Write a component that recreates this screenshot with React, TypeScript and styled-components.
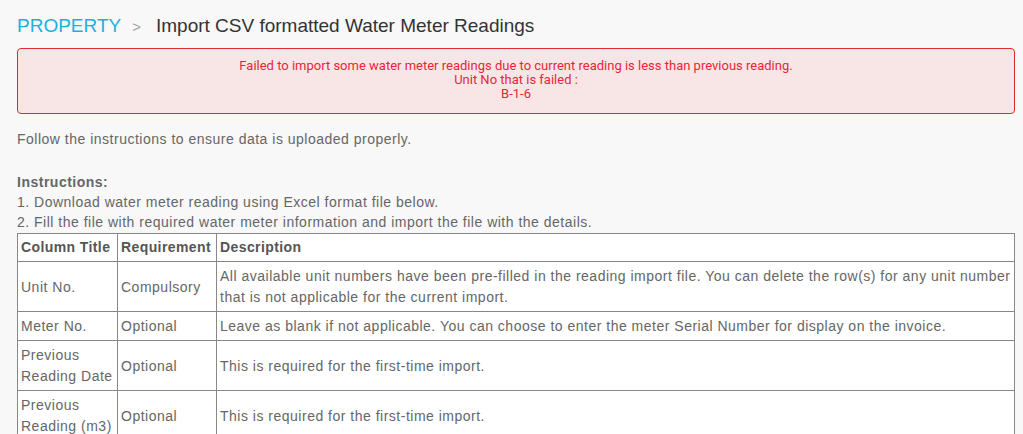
import React from "react";
import styled, { createGlobalStyle } from "styled-components";

const GlobalStyle = createGlobalStyle`
  html, body {
    margin: 0;
    padding: 0;
    background: #f8f8f8;
  }
  body {
    font-family: "Liberation Sans", Arial, sans-serif;
    font-size: 14px;
    line-height: 20px;
    color: #666;
  }
`;

interface Row {
  title: string[];
  requirement: string;
  description: string;
}

const rows: Row[] = [
  {
    title: ["Unit No."],
    requirement: "Compulsory",
    description:
      "All available unit numbers have been pre-filled in the reading import file. You can delete the row(s) for any unit number that is not applicable for the current import.",
  },
  {
    title: ["Meter No."],
    requirement: "Optional",
    description:
      "Leave as blank if not applicable. You can choose to enter the meter Serial Number for display on the invoice.",
  },
  {
    title: ["Previous", "Reading Date"],
    requirement: "Optional",
    description: "This is required for the first-time import.",
  },
  {
    title: ["Previous", "Reading (m3)"],
    requirement: "Optional",
    description: "This is required for the first-time import.",
  },
];

const App: React.FunctionComponent = (): React.ReactElement => {
  return (
    <Page>
      <GlobalStyle />
      <Breadcrumb>
        <Crumb>PROPERTY</Crumb>
        <Chevron>&gt;</Chevron>
        <PageTitle>Import CSV formatted Water Meter Readings</PageTitle>
      </Breadcrumb>

      <Alert>
        Failed to import some water meter readings due to current reading is
        less than previous reading.
        <br />
        Unit No that is failed :
        <br />
        B-1-6
      </Alert>

      <Intro>Follow the instructions to ensure data is uploaded properly.</Intro>

      <Instructions>
        <strong>Instructions:</strong>
        <br />
        1. Download water meter reading using Excel format file below.
        <br />
        2. Fill the file with required water meter information and import the
        file with the details.
      </Instructions>

      <Table>
        <colgroup>
          <col style={{ width: 100 }} />
          <col style={{ width: 99 }} />
          <col />
        </colgroup>
        <thead>
          <tr>
            <Th>Column Title</Th>
            <Th>Requirement</Th>
            <Th>Description</Th>
          </tr>
        </thead>
        <tbody>
          {rows.map((row) => (
            <tr key={row.title.join(" ")}>
              <Td>
                {row.title.map((line, i) => (
                  <React.Fragment key={line}>
                    {i > 0 && <br />}
                    {line}
                  </React.Fragment>
                ))}
              </Td>
              <Td>{row.requirement}</Td>
              <Td>{row.description}</Td>
            </tr>
          ))}
        </tbody>
      </Table>
    </Page>
  );
};

const Page = styled.div`
  padding: 13px 8px 0 17px;
  height: 434px;
  box-sizing: border-box;
  overflow: hidden;
  letter-spacing: 0.5px;
`;

const Breadcrumb = styled.div`
  display: flex;
  align-items: baseline;
  font-size: 19px;
  line-height: 26px;
  letter-spacing: 0;
`;

const Crumb = styled.span`
  color: #1bb0e2;
`;

const Chevron = styled.span`
  color: #a0a0a0;
  font-size: 15px;
  margin: 0 15px 0 11px;
`;

const PageTitle = styled.span`
  color: #333;
`;

const Alert = styled.div`
  margin-top: 8px;
  border: 1px solid #de2a2a;
  border-radius: 4px;
  background: #f8e6e6;
  color: #e8253a;
  font-family: Roboto, "Liberation Sans", sans-serif;
  font-size: 13px;
  line-height: 14px;
  letter-spacing: 0;
  text-align: center;
  padding: 10px 10px 10px;
  height: 66px;
  box-sizing: border-box;
`;

const Intro = styled.p`
  margin: 15px 0 0;
`;

const Instructions = styled.p`
  margin: 23px 0 0;

  strong {
    font-weight: bold;
  }
`;

const Table = styled.table`
  margin-top: 1px;
  width: 998px;
  border-collapse: collapse;
  background: #fff;
  table-layout: fixed;
`;

const Th = styled.th`
  border: 1px solid #888;
  padding: 3px 3px 4px;
  text-align: left;
  font-weight: bold;
  color: #555;
  line-height: 20px;
  letter-spacing: 0.4px;
`;

const Td = styled.td`
  border: 1px solid #888;
  padding: 4px 3px 3px;
  line-height: 21px;
  vertical-align: middle;
`;

export default App;
